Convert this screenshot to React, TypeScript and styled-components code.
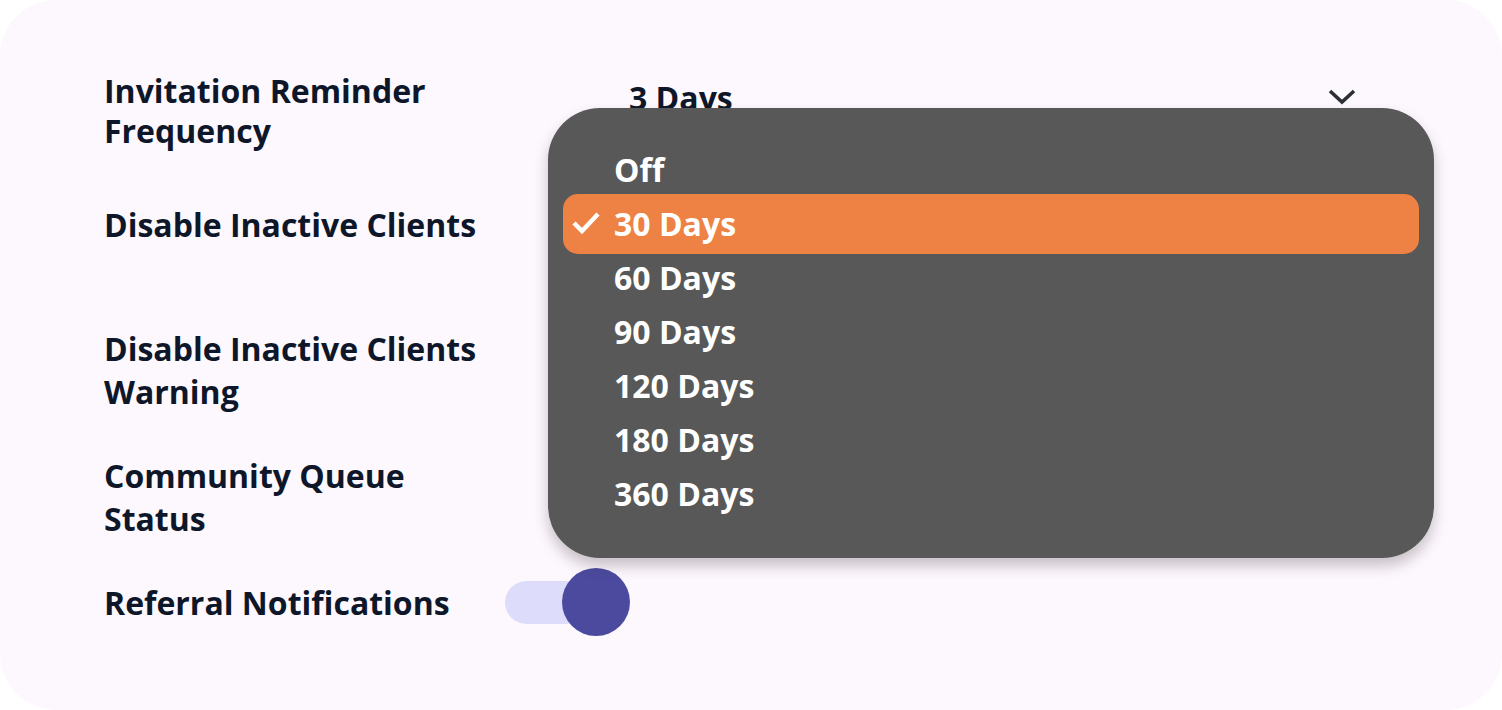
import React from "react";
import styled, { createGlobalStyle } from "styled-components";

const Global = createGlobalStyle`
  html, body { margin: 0; padding: 0; background: #ffffff; }
  body { font-family: "Open Sans", "Noto Sans", sans-serif; }
  * { box-sizing: border-box; }
`;

const Card = styled.div`
  width: 1502px;
  height: 710px;
  background: #fdf8fd;
  border-radius: 56px;
  padding: 60px 0 0 104px;
  display: flex;
  flex-direction: column;
  overflow: hidden;
`;

const Row = styled.div<{ $h: number; $align?: string }>`
  height: ${(p) => p.$h}px;
  display: grid;
  grid-template-columns: 401px 1fr;
  align-items: ${(p) => p.$align || "center"};
`;

const Label = styled.div<{ $pt?: number; $lh?: number }>`
  font-size: 32px;
  font-weight: 700;
  line-height: ${(p) => p.$lh || 43}px;
  color: #0e1729;
  padding-top: ${(p) => p.$pt || 0}px;
  white-space: nowrap;
`;

const SelectWrap = styled.div`
  position: relative;
  margin-left: 43px;
  width: 886px;
`;

const Trigger = styled.div`
  display: flex;
  align-items: center;
  justify-content: space-between;
  height: 50px;
  padding: 0 78px 0 81px;
  margin-top: 12px;
  font-size: 32px;
  font-weight: 700;
  color: #0e1729;
`;

const Menu = styled.ul`
  position: absolute;
  top: 48px;
  left: 0;
  width: 886px;
  height: 450px;
  margin: 0;
  padding: 34px 0 0;
  list-style: none;
  background: #585858;
  border-radius: 52px;
  box-shadow: 0 8px 14px rgba(60, 50, 60, 0.28);
  z-index: 10;
`;

const Item = styled.li<{ $selected?: boolean }>`
  position: relative;
  height: 54px;
  display: flex;
  align-items: center;
  padding-left: 66px;
  font-size: 32px;
  font-weight: 700;
  color: #ffffff;
  &::before {
    content: "";
    position: absolute;
    inset: -2px 15px -4px;
    border-radius: 15px;
    background: ${(p) => (p.$selected ? "#ee8244" : "transparent")};
  }
  & > * {
    position: relative;
  }
`;

const Check = styled.svg`
  position: absolute;
  left: 23px;
  top: 14px;
`;

const Toggle = styled.div`
  display: flex;
  align-items: center;
`;

const Track = styled.div`
  width: 82px;
  height: 43px;
  border-radius: 22px;
  background: #dddcfb;
`;

const Knob = styled.div`
  width: 68px;
  height: 68px;
  border-radius: 50%;
  background: #4b4a9e;
  margin-left: -25px;
`;

const options = ["Off", "30 Days", "60 Days", "90 Days", "120 Days", "180 Days", "360 Days"];

export default function App() {
  return (
    <>
      <Global />
      <Card>
        <Row $h={102} $align="start">
          <Label $pt={11} $lh={40}>
            Invitation Reminder
            <br />
            Frequency
          </Label>
          <SelectWrap>
            <Trigger>
              <span>3 Days</span>
              <svg width="28" height="16" viewBox="0 0 28 16">
                <path d="M2 2 L14 13 L26 2" fill="none" stroke="#2e2e36" strokeWidth="3.6" />
              </svg>
            </Trigger>
            <Menu>
              {options.map((o) => (
                <Item key={o} $selected={o === "30 Days"}>
                  {o === "30 Days" && (
                    <Check width="30" height="26" viewBox="0 0 30 26">
                      <path d="M3 13 L11 21 L27 4" fill="none" stroke="#ffffff" strokeWidth="4.4" />
                    </Check>
                  )}
                  <span>{o}</span>
                </Item>
              ))}
            </Menu>
          </SelectWrap>
        </Row>
        <Row $h={124}>
          <Label>Disable Inactive Clients</Label>
          <div />
        </Row>
        <Row $h={168}>
          <Label>
            Disable Inactive Clients
            <br />
            Warning
          </Label>
          <div />
        </Row>
        <Row $h={86}>
          <Label>
            Community Queue
            <br />
            Status
          </Label>
          <div />
        </Row>
        <Row $h={124}>
          <Label>Referral Notifications</Label>
          <Toggle>
            <Track />
            <Knob />
          </Toggle>
        </Row>
      </Card>
    </>
  );
}
